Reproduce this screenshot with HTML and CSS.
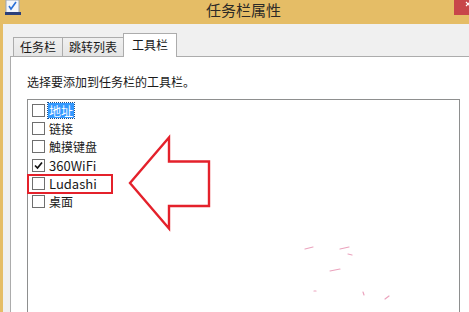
FILE: index.html
```html
<!DOCTYPE html>
<html>
	<head>
		<meta charset="utf-8">
		<title>任务栏属性</title>
		<link rel="stylesheet" href="styles.css">
	</head>

	<body>
		<div class="window">
			<div class="titlebar">
				<svg class="appicon" width="16" height="16" viewBox="0 0 16 16">
					<rect x="1" y="0" width="13" height="13" fill="#f4f6fa" stroke="#9aa6b8" stroke-width="1"/>
					<path d="M4 6 L6 9 L11 2" fill="none" stroke="#2a6fd6" stroke-width="1.6"/>
					<rect x="0" y="12" width="16" height="3" fill="#2b3f7a"/>
				</svg>
				<span class="title">任务栏属性</span>
				<div class="close">
					<svg width="15" height="15" viewBox="0 0 15 15"><path d="M12 2 L16 6 M16 2 L12 6" stroke="#fff" stroke-width="1.2"/></svg>
				</div>
			</div>

			<div class="client">
				<div class="tabs">
					<div class="tab">任务栏</div>
					<div class="tab">跳转列表</div>
					<div class="tab active">工具栏</div>
				</div>

				<div class="panel">
					<p class="hint">选择要添加到任务栏的工具栏。</p>

					<div class="listbox">
						<div class="row"><span class="check"></span><span class="label selected">地址</span></div>
						<div class="row"><span class="check"></span><span class="label">链接</span></div>
						<div class="row"><span class="check"></span><span class="label">触摸键盘</span></div>
						<div class="row">
							<span class="check">
								<svg width="11" height="11" viewBox="0 0 11 11"><path d="M2 5.5 L4.5 8 L9 2.5" fill="none" stroke="#111" stroke-width="1.7"/></svg>
							</span>
							<span class="label latin">360WiFi</span>
						</div>
						<div class="row"><span class="check"></span><span class="label latin">Ludashi</span></div>
						<div class="row"><span class="check"></span><span class="label">桌面</span></div>
					</div>
				</div>
			</div>

			<svg class="marks" width="469" height="312" viewBox="0 0 469 312">
				<rect x="28" y="175" width="84" height="18" fill="none" stroke="#e4212b" stroke-width="2"/>
				<polygon points="130,183 169,137.5 169,161.5 209,161.5 209,206 169,206 169,228.5" fill="none" stroke="#e4212b" stroke-width="2.4" stroke-linejoin="miter"/>
				<g stroke="#eba3bd" stroke-width="1.2" stroke-linecap="round">
					<line x1="305" y1="249" x2="313" y2="247"/>
					<line x1="340" y1="249" x2="349" y2="247"/>
					<line x1="348" y1="254" x2="352" y2="255"/>
					<line x1="330" y1="271" x2="340" y2="269"/>
					<line x1="314" y1="291" x2="316" y2="291"/>
					<line x1="363" y1="292" x2="364" y2="295"/>
					<line x1="385" y1="299" x2="389" y2="296"/>
				</g>
			</svg>
		</div>
	</body>
</html>
```

FILE: styles.css
```css
body {
	margin: 0;
	overflow: hidden;
	font-family: "Noto Sans CJK SC", "Noto Sans", sans-serif;
	font-size: 12px;
	color: #1a1a1a;
}

.window {
	position: relative;
	width: 469px;
	height: 312px;
	overflow: hidden;
	background: #e5bd66;
}

.titlebar {
	height: 24px;
	display: flex;
	align-items: flex-start;
}

.appicon {
	margin-left: 5px;
	flex: none;
}

.title {
	margin-left: 185px;
	font-size: 15px;
	line-height: 19px;
	color: #2c2a26;
}

.close {
	margin-left: auto;
	width: 15px;
	height: 15px;
	background: #c8464a;
}

.close svg {
	display: block;
}

.client {
	margin-left: 3px;
	height: 288px;
	background: #f0f0f0;
	padding-left: 7px;
	padding-top: 9px;
	box-sizing: border-box;
}

.tabs {
	display: flex;
	align-items: flex-end;
	height: 23px;
	margin-left: 3px;
	position: relative;
	z-index: 1;
}

.tab {
	height: 19px;
	line-height: 18px;
	padding: 0 6px;
	border: 1px solid #acacac;
	border-bottom: none;
	background: linear-gradient(#f0f0f0, #e5e5e5);
	box-sizing: border-box;
}

.tab + .tab {
	margin-left: -1px;
}

.tab.active {
	height: 24px;
	margin-bottom: -1px;
	padding: 0 8px;
	line-height: 22px;
	background: #fff;
}

.panel {
	background: #fff;
	border-top: 1px solid #acacac;
	border-left: 1px solid #acacac;
	height: 300px;
	padding: 17px 9px 0 16px;
}

.hint {
	margin: 0;
	line-height: 16px;
}

.listbox {
	margin-top: 9px;
	height: 240px;
	border: 1px solid #8e8f8f;
	padding-top: 1px;
}

.row {
	height: 18.3px;
	display: flex;
	align-items: center;
	padding-left: 4px;
}

.check {
	width: 11px;
	height: 11px;
	border: 1px solid #6f6f6f;
	background: #fff;
	display: flex;
	align-items: center;
	justify-content: center;
	flex: none;
}

.label {
	margin-left: 3px;
	padding: 0 1px;
	line-height: 15px;
}

.label.latin {
	font-size: 13px;
}

.label.selected {
	background: #3399ff;
	color: #fff;
	outline: 1px dotted #1c4f8a;
}

.marks {
	position: absolute;
	left: 0;
	top: 0;
	pointer-events: none;
}
```
